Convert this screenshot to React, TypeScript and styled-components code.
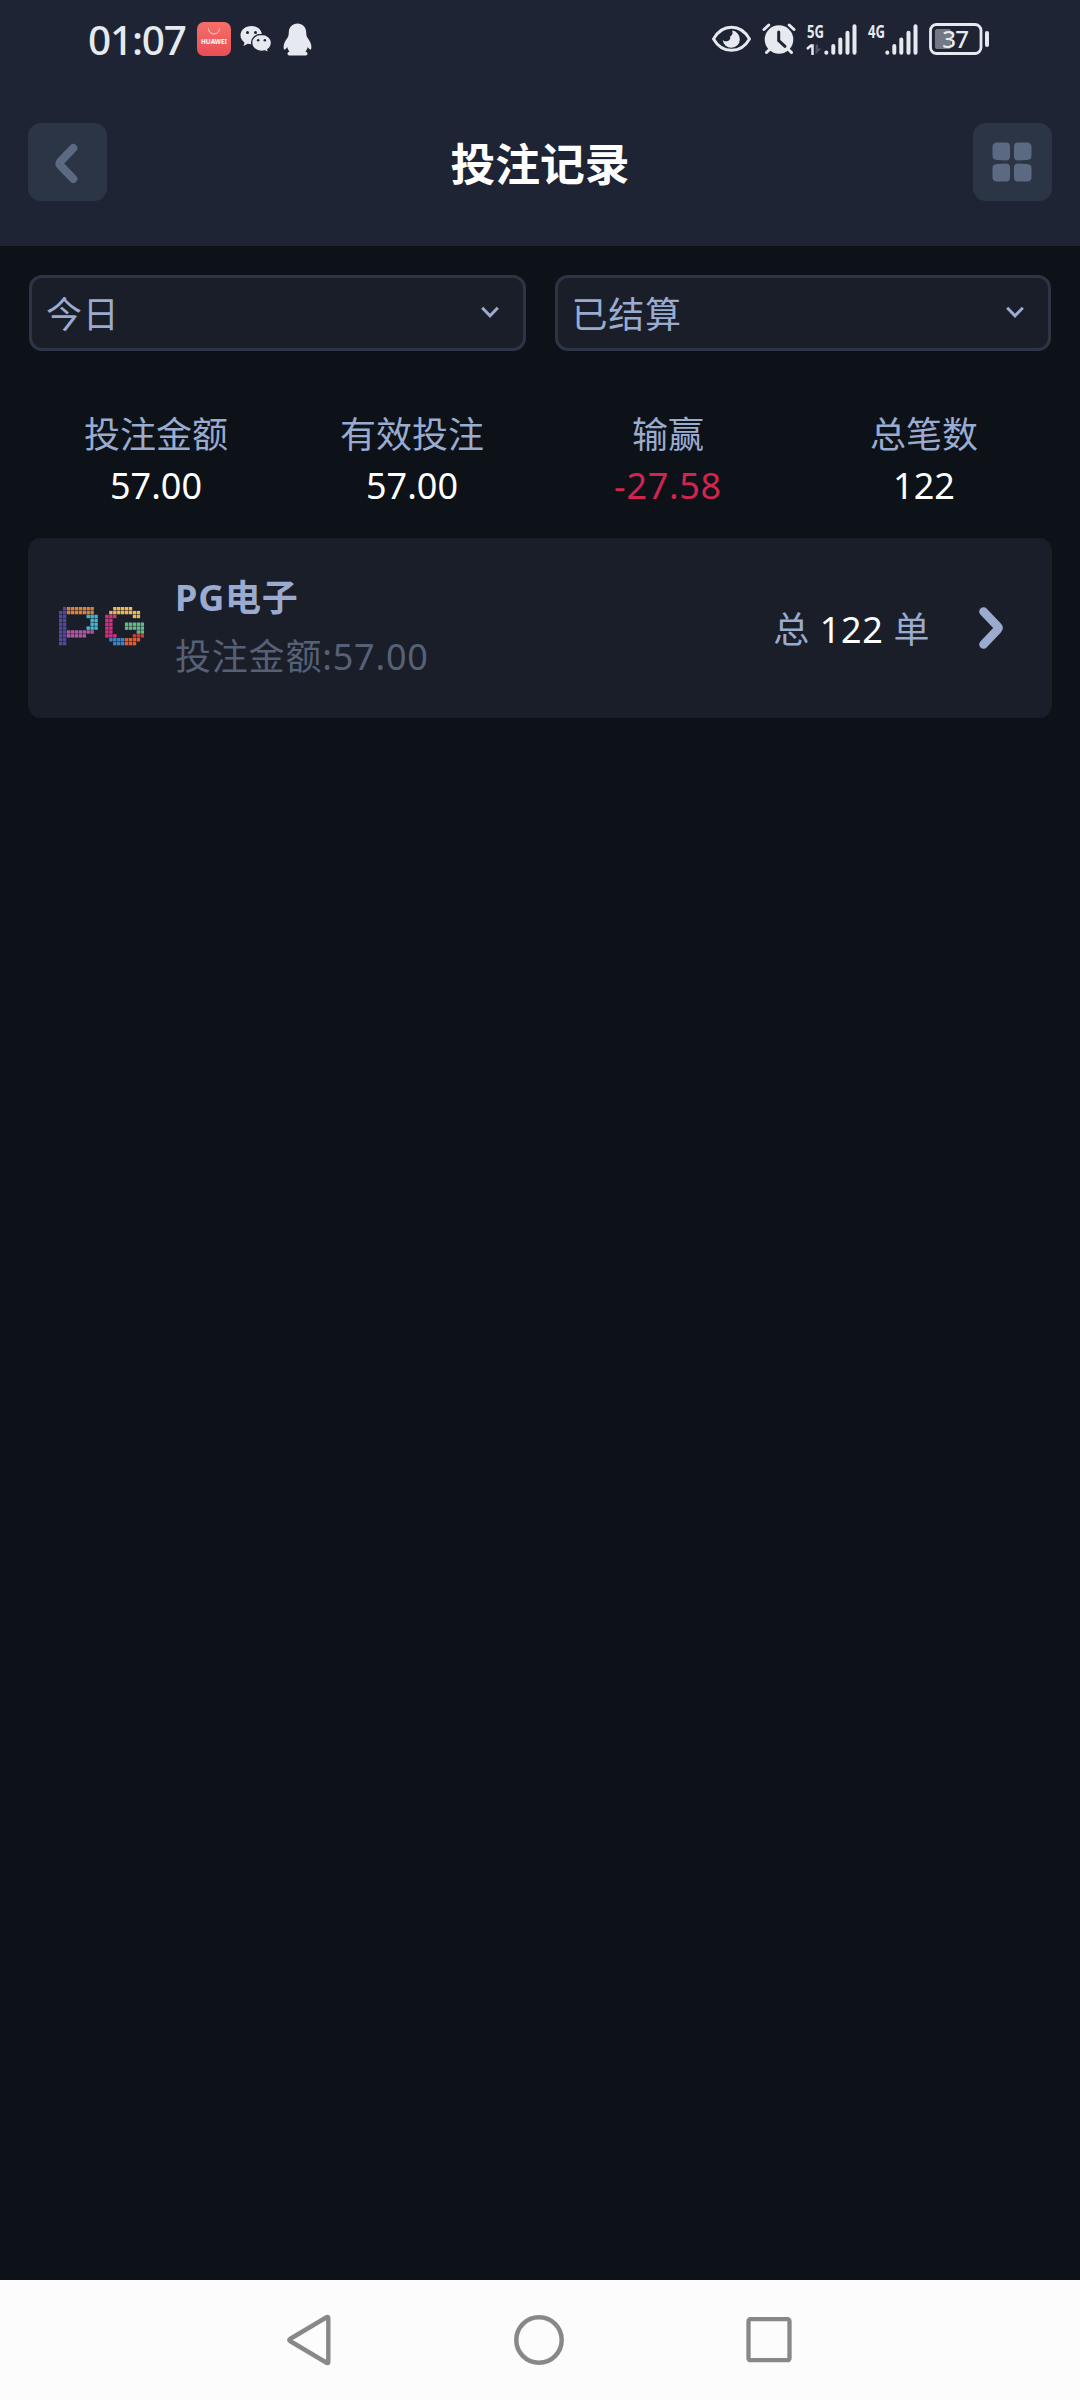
import React from "react";
import styled, { createGlobalStyle } from "styled-components";

const cjk = `"Noto Sans", "Noto Sans CJK SC", sans-serif`;

const Global = createGlobalStyle`
  *, *::before, *::after { box-sizing: border-box; }
  html, body { margin: 0; padding: 0; background: #0d1219; }
  body { font-family: ${cjk}; font-size: 36px; color: #9aabcf; }
  svg { display: block; flex: none; overflow: visible; }
`;

const Screen = styled.div`
  width: 1080px;
  height: 2400px;
  display: flex;
  flex-direction: column;
  background: #0d1219;
  overflow: hidden;
`;

const Header = styled.header`
  height: 246px;
  flex: none;
  display: flex;
  flex-direction: column;
  background: #1e2433;
`;

const StatusBar = styled.div`
  height: 78px;
  display: flex;
  justify-content: space-between;
  padding: 0 90px 0 88px;
`;

const StatusGroup = styled.div<{ $gap: number }>`
  display: flex;
  align-items: center;
  gap: ${(p) => p.$gap}px;
`;

const Clock = styled.span`
  width: 100px;
  font: 500 40.5px/76px ${cjk};
  letter-spacing: -1.2px;
  color: #e6e9ef;
  white-space: nowrap;
  padding-top: 2px;
`;

const TitleBar = styled.div`
  height: 168px;
  display: flex;
  align-items: flex-start;
  justify-content: space-between;
  padding: 45px 28px 0;
`;

const SquareButton = styled.button`
  width: 79px;
  height: 78px;
  padding: 0;
  border: 0;
  border-radius: 13px;
  background: #2c3545;
  display: flex;
  align-items: center;
  justify-content: center;
`;

const Title = styled.h1`
  margin: 0;
  font: 700 44.8px/82px ${cjk};
  color: #fff;
`;

const Filters = styled.div`
  display: flex;
  gap: 29px;
  padding: 29px 29px 0;
`;

const Select = styled.button`
  flex: 1;
  height: 76px;
  display: flex;
  align-items: center;
  justify-content: space-between;
  padding: 0 24px 0 14px;
  border: 3px solid #2c3545;
  border-radius: 13px;
  background: #1a1e29;
  color: #9aabcf;
`;

const SelectLabel = styled.span`
  padding-top: 4px;
  font: 400 36px/66px ${cjk};
  letter-spacing: 0.7px;
`;

const Stats = styled.div`
  display: grid;
  grid-template-columns: repeat(4, 1fr);
  padding: 57px 28px 0;
  height: 186px;
`;

const Stat = styled.div`
  text-align: center;
`;

const StatLabel = styled.div`
  line-height: 53px;
`;

const StatValue = styled.div<{ $loss?: boolean }>`
  line-height: 50px;
  letter-spacing: ${(p) => (p.$loss ? 0.7 : 0)}px;
  color: ${(p) => (p.$loss ? "#d3244f" : "#fff")};
`;

const Card = styled.section`
  height: 180px;
  margin: 1px 28px 0;
  padding: 0 47px 0 30px;
  display: flex;
  align-items: center;
  border-radius: 13px;
  background: #1a1e29;
`;

const CardText = styled.div`
  flex: 1;
  padding: 0 0 3px 29px;
  letter-spacing: 0.8px;
`;

const CardName = styled.div`
  font-weight: 700;
  line-height: 60px;
`;

const CardAmount = styled.div`
  line-height: 58px;
  color: #566176;
`;

const CardCount = styled.div`
  line-height: 60px;
  padding-top: 4px;
  margin-right: 47px;
  letter-spacing: 0.6px;
  white-space: pre;
`;

const CountValue = styled.span`
  color: #fff;
`;

const NavBar = styled.nav`
  height: 120px;
  margin-top: auto;
  display: flex;
  align-items: center;
  justify-content: space-between;
  padding: 0 288px 0 286px;
  background: #fcfcfc;
`;

const HuaweiIcon = () => (
  <svg width="34" height="34" viewBox="0 0 34 34">
    <defs>
      <linearGradient id="hw" x1="0" y1="0" x2="0" y2="1">
        <stop offset="0" stopColor="#f5706a" />
        <stop offset="1" stopColor="#e84e54" />
      </linearGradient>
    </defs>
    <rect width="34" height="34" rx="7" fill="url(#hw)" />
    <path d="M11.5 6.5a5.5 5.5 0 0 0 11 0" fill="none" stroke="#fbd0cd" strokeWidth="1" />
    <text x="17" y="22" textAnchor="middle" textLength="26" lengthAdjust="spacingAndGlyphs" fontSize="6.6" fontWeight="700" fill="#fff" fontFamily="Noto Sans, sans-serif">HUAWEI</text>
  </svg>
);

const WeChatIcon = () => (
  <svg width="34" height="28" viewBox="0 0 34 28">
    <g fill="#e6e9ef">
      <path d="M11.5 1C5.200 1 .5 5.200.5 10.300c0 3 1.600 5.400 4 7.100L3.500 21l4.200-2.200c1.200.3 2.500.5 3.800.5C17.700 19.300 22 15.200 22 10.200S17.700 1 11.500 1z" />
      <path stroke="#1e2433" strokeWidth="1.400" d="M21.500 9.200c-5.700 0-9.900 3.800-9.900 8.600s4.200 8.600 9.900 8.600c1.200 0 2.300-.2 3.400-.5l3.800 2-.9-3.300c2.300-1.600 3.700-4 3.700-6.800 0-4.800-4.400-8.600-10-8.600z" />
    </g>
    <g fill="#1e2433">
      <circle cx="7.500" cy="7.500" r="1.500" />
      <circle cx="15.500" cy="7.500" r="1.500" />
      <circle cx="18.200" cy="15.300" r="1.250" />
      <circle cx="24.800" cy="15.300" r="1.250" />
    </g>
  </svg>
);

const QQIcon = () => (
  <svg width="29" height="33" viewBox="0 0 29 33">
    <path fill="#e6e9ef" d="M14.500.5C9.500.5 5.800 4.300 5.800 9.300c0 1.700-.3 3.700-1 5C2.500 17.500.6 20.500.6 24c0 2.300.7 2.700 1.200 2.500.9-.3 1.800-1.700 2.400-2.600.4 1.900 1.200 3.300 2.300 4.500-1.300.6-2.200 1.500-2 2.500.2 1.300 1.500 1.600 3 1.600h14c1.500 0 2.800-.3 3-1.600.2-1-.7-1.900-2-2.500 1.100-1.200 1.900-2.600 2.300-4.500.6.9 1.500 2.300 2.400 2.600.5.200 1.200-.2 1.200-2.500 0-3.500-1.900-6.500-4.200-9.700-.7-1.300-1-3.300-1-5C23.200 4.300 19.500.5 14.500.5z" />
  </svg>
);

const EyeIcon = () => (
  <svg width="40" height="28" viewBox="0 0 40 28">
    <path d="M1.500 14C5.500 7 12 2.300 19.500 2.300S33.500 7 37.500 14c-4 7-10.500 11.300-18 11.300S5.500 21 1.500 14z" fill="none" stroke="#e6e9ef" strokeWidth="2.900" strokeLinejoin="round" />
    <path d="M20 5.600a8.600 8.600 0 1 1-9.300 9.400c1.200 1.500 3.500 1.700 5.200.9 2-1 2.800-2.600 2.200-4.500 2.200-.8 3.200-3.400 1.900-5.800z" fill="#e6e9ef" />
  </svg>
);

const AlarmIcon = () => (
  <svg width="35" height="32" viewBox="0 0 35 32">
    <g stroke="#e6e9ef" strokeWidth="3" strokeLinecap="round" fill="none">
      <path d="M2 6.500 6.800 2M32 6.500 27.200 2M4.500 29.500l4-4M29.500 29.500l-4-4" />
    </g>
    <circle cx="17" cy="16.500" r="14.300" fill="#e6e9ef" />
    <path d="M16.700 9v8.500l6.300 5.800" fill="none" stroke="#1e2433" strokeWidth="3" strokeLinecap="round" />
  </svg>
);

const SignalIcon = ({ label, arrows }: { label: string; arrows?: boolean }) => (
  <svg width="51" height="33" viewBox="0 0 51 33">
    <text x="0" y="15" fontSize="18.5" fontWeight="700" textLength="17" lengthAdjust="spacingAndGlyphs" fill="#e6e9ef" fontFamily="Noto Sans, sans-serif">{label}</text>
    {arrows && (
      <g>
        <path d="M0 26l4-3.500h1.500V32" fill="none" stroke="#e6e9ef" strokeWidth="2.500" />
        <path d="M8.500 21.500v10l6-6h-3.500v-4z" fill="#4d5361" />
      </g>
    )}
    <g stroke="#e6e9ef" strokeWidth="4" strokeLinecap="round">
      <path d="M19.300 29.500v.2M26.300 23v6.700M33.300 16.500v13.200M40.500 9.800v20M47.500 3.300v26.500" />
    </g>
  </svg>
);

const BatteryIcon = () => (
  <svg width="61" height="32" viewBox="0 0 61 32">
    <rect x="1.500" y="1.500" width="50.500" height="29" rx="6" fill="none" stroke="#e6e9ef" strokeWidth="2.800" />
    <rect x="6" y="6" width="16" height="20" rx="2" fill="#737884" />
    <rect x="56" y="8" width="4" height="16" rx="2" fill="#e6e9ef" />
    <text x="26.200" y="25" textAnchor="middle" fontSize="24" fontWeight="500" letterSpacing="-.8" fill="#e6e9ef" fontFamily="Noto Sans, sans-serif">37</text>
  </svg>
);

const BackIcon = () => (
  <svg width="26" height="42" viewBox="0 0 26 42">
    <path d="M18.300 7.200 5.300 20.600q-1.400 1.900 0 3.800L18.300 37.800" fill="none" stroke="#5c6982" strokeWidth="8.200" strokeLinecap="round" strokeLinejoin="round" />
  </svg>
);

const GridIcon = () => (
  <svg width="40" height="40" viewBox="0 0 40 40" fill="#5c6982">
    <path d="M5 .5h9q4 0 4 4V14.500q0 4-4 4L4.500 18Q.5 17.500.5 14V5Q.5.500 5 .500z" />
    <path d="M35 .5h-9q-4 0-4 4V14.500q0 4 4 4L35.500 18Q39.500 17.500 39.500 14V5Q39.500.500 35 .500z" />
    <path d="M5 39.500h9q4 0 4-4V25.500q0-4-4-4L4.500 22Q.5 22.500.5 26V35Q.5 39.500 5 39.500z" />
    <path d="M35 39.500h-9q-4 0-4-4V25.500q0-4 4-4L35.500 22Q39.500 22.500 39.500 26V35Q39.500 39.500 35 39.500z" />
  </svg>
);

const ChevronDown = () => (
  <svg width="18" height="12" viewBox="0 0 18 12">
    <path d="M1.200 .8 9 8.800l7.800-8" fill="none" stroke="#9aabcf" strokeWidth="3" />
  </svg>
);

const ChevronRight = () => (
  <svg width="28" height="44" viewBox="0 0 28 44">
    <path d="M6.500 5.500 20.500 20.200q1.700 1.800 0 3.600L6.500 38.500" fill="none" stroke="#9aabcf" strokeWidth="8.600" strokeLinecap="round" strokeLinejoin="round" />
  </svg>
);

const dotColors: Record<string, string> = {
  p: "#54489c",
  o: "#dc7f3a",
  c: "#40b8d6",
  m: "#b157a3",
  y: "#ecb953",
  r: "#d83080",
  g: "#64bb88",
  b: "#3d84c6",
  d: "#cf3b35",
  e: "#e35c2d",
};

const dotRows = [
  ".pooooooo.....yyyyy...",
  "ppooooooo....yyyyyyyy.",
  "pp.....ccc..rrr....yy.",
  "pp......cc..rr........",
  "pp......cc..rr...ggggg",
  "pp.....ccc..rr...ggggg",
  "ppmmmmmmm...rr......gg",
  "ppmmmmm.....rrr....ddd",
  "pp...........bbbbeeee.",
  "pp............bbbeee..",
];

const PGLogo = () => (
  <svg width="88" height="44" viewBox="0 0 88 44">
    {dotRows.flatMap((row, y) =>
      [...row].map((k, x) =>
        k === "." ? null : (
          <rect key={`${x}-${y}`} x={1 + x * 3.93 - (x > 11 ? 0.9 : 0)} y={1 + y * 3.88} width="3.4" height="3.4" fill={dotColors[k]} />
        )
      )
    )}
  </svg>
);

const stats = [
  { label: "投注金额", value: "57.00" },
  { label: "有效投注", value: "57.00" },
  { label: "输赢", value: "-27.58", loss: true },
  { label: "总笔数", value: "122" },
];

export default function App() {
  return (
    <Screen>
      <Global />
      <Header>
        <StatusBar>
          <StatusGroup $gap={9}>
            <Clock>01:07</Clock>
            <HuaweiIcon />
            <WeChatIcon />
            <QQIcon />
          </StatusGroup>
          <StatusGroup $gap={10}>
            <EyeIcon />
            <AlarmIcon />
            <SignalIcon label="5G" arrows />
            <SignalIcon label="4G" />
            <BatteryIcon />
          </StatusGroup>
        </StatusBar>
        <TitleBar>
          <SquareButton aria-label="返回"><BackIcon /></SquareButton>
          <Title>投注记录</Title>
          <SquareButton aria-label="菜单"><GridIcon /></SquareButton>
        </TitleBar>
      </Header>
      <Filters>
        <Select><SelectLabel>今日</SelectLabel><ChevronDown /></Select>
        <Select><SelectLabel>已结算</SelectLabel><ChevronDown /></Select>
      </Filters>
      <Stats>
        {stats.map((s) => (
          <Stat key={s.label}>
            <StatLabel>{s.label}</StatLabel>
            <StatValue $loss={s.loss}>{s.value}</StatValue>
          </Stat>
        ))}
      </Stats>
      <Card>
        <PGLogo />
        <CardText>
          <CardName>PG电子</CardName>
          <CardAmount>投注金额:57.00</CardAmount>
        </CardText>
        <CardCount>总 <CountValue>122</CountValue> 单</CardCount>
        <ChevronRight />
      </Card>
      <NavBar>
        <svg width="46" height="54" viewBox="0 0 46 54">
          <path d="M41 4 4 26q-1.500 1 0 2L41 50q1.300.5 1.300-1V5q0-1.500-1.300-1z" fill="none" stroke="#888" strokeWidth="4.400" strokeLinejoin="round" />
        </svg>
        <svg width="52" height="52" viewBox="0 0 52 52">
          <circle cx="26" cy="26" r="22.700" fill="none" stroke="#888" strokeWidth="4.500" />
        </svg>
        <svg width="46" height="46" viewBox="0 0 46 46">
          <rect x="2.500" y="2.200" width="41" height="41" rx="2" fill="none" stroke="#888" strokeWidth="4.300" />
        </svg>
      </NavBar>
    </Screen>
  );
}
